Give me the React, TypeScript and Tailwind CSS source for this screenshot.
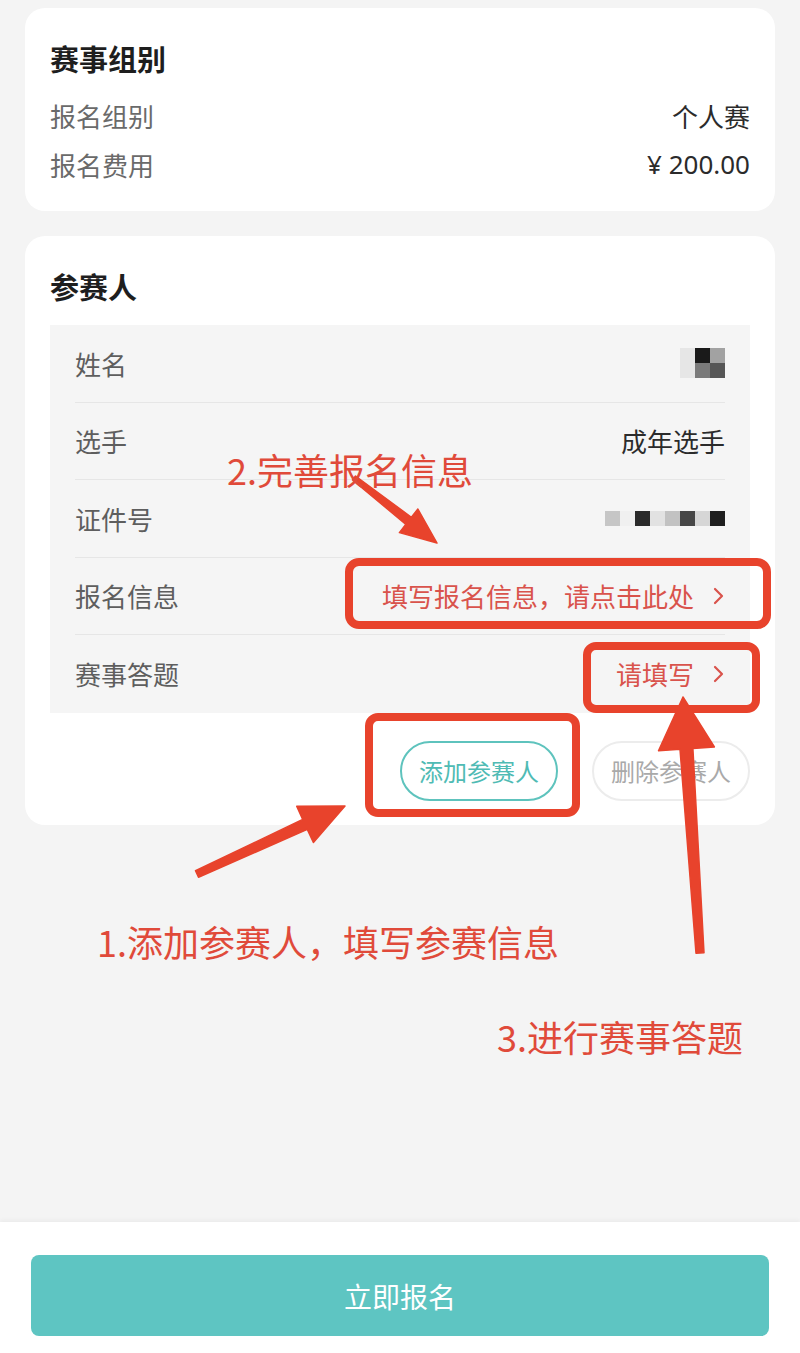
const font = { fontFamily: '"Noto Sans CJK SC", "Noto Sans", sans-serif' };

type Pt = [number, number];

// builds a tapered arrow polygon from tail to tip
const arrowPoints = (tail: Pt, tip: Pt, w0: number, w1: number, headW: number, headL: number) => {
  const dx = tip[0] - tail[0];
  const dy = tip[1] - tail[1];
  const len = Math.hypot(dx, dy);
  const ux = dx / len;
  const uy = dy / len;
  const nx = -uy;
  const ny = ux;
  const bx = tip[0] - ux * headL;
  const by = tip[1] - uy * headL;
  const pts: Pt[] = [
    [tail[0] + (nx * w0) / 2, tail[1] + (ny * w0) / 2],
    [bx + (nx * w1) / 2, by + (ny * w1) / 2],
    [bx + (nx * headW) / 2, by + (ny * headW) / 2],
    tip,
    [bx - (nx * headW) / 2, by - (ny * headW) / 2],
    [bx - (nx * w1) / 2, by - (ny * w1) / 2],
    [tail[0] - (nx * w0) / 2, tail[1] - (ny * w0) / 2],
  ];
  return pts.map((p) => `${p[0].toFixed(1)},${p[1].toFixed(1)}`).join(" ");
};

const Chevron = () => (
  <svg width="14" height="22" viewBox="0 0 14 22" className="ml-[17px]">
    <polyline points="4,4 11,11 4,18" fill="none" stroke="currentColor" strokeWidth="2.2" strokeLinecap="round" strokeLinejoin="round" />
  </svg>
);

const Mosaic = ({ cells }: { cells: string[][] }) => (
  <div className="flex flex-col">
    {cells.map((row, i) => (
      <div key={i} className="flex">
        {row.map((c, j) => (
          <div key={j} className="w-[15px] h-[15px]" style={{ backgroundColor: c }} />
        ))}
      </div>
    ))}
  </div>
);

const rows = [
  { label: "姓名", value: <Mosaic cells={[["#e6e6e6", "#1a1a1a", "#a2a2a2"], ["#e6e6e6", "#7a7a7a", "#565656"]]} /> },
  { label: "选手", value: <span className="text-[26px] text-[#2b2b2b]">成年选手</span> },
  {
    label: "证件号",
    value: <Mosaic cells={[["#c6c6c6", "#f0f0f0", "#2a2a2a", "#e2e2e2", "#c2c2c2", "#474747", "#d6d6d6", "#1f1f1f"]]} />,
  },
  {
    label: "报名信息",
    value: (
      <span className="flex items-center text-[26px] text-[#d9534c]">
        填写报名信息，请点击此处
        <Chevron />
      </span>
    ),
  },
  {
    label: "赛事答题",
    value: (
      <span className="flex items-center text-[26px] text-[#d9534c]">
        请填写
        <Chevron />
      </span>
    ),
  },
];

export default function App() {
  return (
    <div className="relative w-[800px] h-[1353px] bg-[#f4f4f4] flex flex-col overflow-hidden" style={font}>
      <div className="flex-1 flex flex-col gap-[25px] px-[25px] pt-[8px]">
        {/* 赛事组别 */}
        <div className="bg-white rounded-[20px] px-[25px] pt-[30px] pb-[22px]">
          <h2 className="text-[29px] font-bold text-[#1e1e1e] leading-[40px]">赛事组别</h2>
          <div className="mt-[13px] flex flex-col">
            <div className="flex justify-between items-center h-[49px] text-[26px]">
              <span className="text-[#6a6a6a]">报名组别</span>
              <span className="text-[#2b2b2b]">个人赛</span>
            </div>
            <div className="flex justify-between items-center h-[49px] text-[26px]">
              <span className="text-[#6a6a6a]">报名费用</span>
              <span className="text-[#2b2b2b]" style={{ fontFamily: '"Noto Sans", "Noto Sans CJK SC", sans-serif' }}>
                ¥ 200.00
              </span>
            </div>
          </div>
        </div>

        {/* 参赛人 */}
        <div className="bg-white rounded-[20px] px-[25px] pt-[30px] pb-[24px]">
          <h2 className="text-[29px] font-bold text-[#1e1e1e] leading-[40px]">参赛人</h2>
          <div className="mt-[19px] bg-[#f5f5f5] px-[25px] flex flex-col">
            {rows.map((r, i) => (
              <div
                key={r.label}
                className={`flex justify-between items-center h-[77.5px] ${i < rows.length - 1 ? "border-b border-[#e6e6e6]" : ""}`}
              >
                <span className="text-[26px] text-[#5e5e5e]">{r.label}</span>
                {r.value}
              </div>
            ))}
          </div>
          <div className="mt-[28px] flex justify-end gap-[34px]">
            <button className="w-[158px] h-[60px] rounded-full border-2 border-[#5ec3bd] text-[#4fbbb4] text-[24px]">
              添加参赛人
            </button>
            <button className="w-[158px] h-[60px] rounded-full border-2 border-[#ececec] text-[#a9a9a9] text-[24px]">
              删除参赛人
            </button>
          </div>
        </div>
      </div>

      {/* bottom bar */}
      <div className="h-[131px] bg-white shadow-[0_-2px_4px_rgba(0,0,0,0.04)] flex items-start justify-center pt-[33px]">
        <button className="w-[738px] h-[81px] rounded-[8px] bg-[#5ec5c2] text-white text-[28px]">立即报名</button>
      </div>

      {/* annotation overlay */}
      <svg className="absolute inset-0 pointer-events-none" width="800" height="1353">
        <rect x="349" y="562" width="418" height="63" rx="10" fill="none" stroke="#e8432c" strokeWidth="8" />
        <rect x="587" y="646" width="169" height="63" rx="9" fill="none" stroke="#e8432c" strokeWidth="8" />
        <rect x="369" y="717" width="207" height="96" rx="9" fill="none" stroke="#e8432c" strokeWidth="8" />
        <polygon points={arrowPoints([354, 478], [437, 543], 5, 9, 30, 36)} fill="#e8432c" strokeLinejoin="round" stroke="#e8432c" strokeWidth="1.5" />
        <polygon points={arrowPoints([197, 874], [345, 806], 7, 11, 40, 44)} fill="#e8432c" strokeLinejoin="round" stroke="#e8432c" strokeWidth="1.5" />
        <polygon points={arrowPoints([700, 953], [683, 697], 8, 13, 56, 52)} fill="#e8432c" strokeLinejoin="round" stroke="#e8432c" strokeWidth="1.5" />
      </svg>
      <div className="absolute left-[227px] top-[449px] text-[36px] leading-[40px] text-[#e04a3a] whitespace-nowrap">
        2.完善报名信息
      </div>
      <div className="absolute left-[97px] top-[921px] text-[36px] leading-[40px] text-[#e04a3a] whitespace-nowrap">
        1.添加参赛人，填写参赛信息
      </div>
      <div className="absolute left-[497px] top-[1016px] text-[36px] leading-[40px] text-[#e04a3a] whitespace-nowrap">
        3.进行赛事答题
      </div>
    </div>
  );
}
